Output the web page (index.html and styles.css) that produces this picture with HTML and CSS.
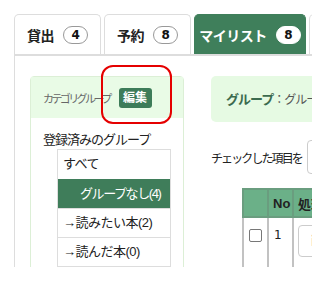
FILE: index.html
```html
<!DOCTYPE html>
<html lang="ja">

<head>
    <meta charset="UTF-8">
    <title>マイリスト</title>
    <link rel="stylesheet" href="styles.css">
</head>

<body>
    <div class="page">
        <ul class="tabs">
            <li class="tab"><span>貸出</span><b class="count">4</b></li>
            <li class="tab"><span>予約</span><b class="count">8</b></li>
            <li class="tab active"><span>マイリスト</span><b class="count">8</b></li>
            <li class="tab"></li>
        </ul>

        <div class="panel">
            <aside class="category">
                <div class="category-head">
                    <span class="category-title">カテゴリグループ</span>
                    <span class="edit">編集</span>
                </div>
                <div class="category-body">
                    <p class="label">登録済みのグループ</p>
                    <ul class="groups">
                        <li>すべて</li>
                        <li class="current">グループなし(4)</li>
                        <li>→読みたい本(2)</li>
                        <li>→読んだ本(0)</li>
                    </ul>
                </div>
            </aside>

            <section class="main">
                <div class="group-title"><b>グループ</b><span>：グループなし</span></div>
                <div class="bulk">
                    <span>チェックした項目を</span>
                    <div class="select"></div>
                </div>
                <table class="list">
                    <thead>
                        <tr>
                            <th class="c-check"></th>
                            <th class="c-no">No</th>
                            <th class="c-act">処理</th>
                        </tr>
                    </thead>
                    <tbody>
                        <tr>
                            <td class="c-check"><span class="checkbox"></span></td>
                            <td class="c-no">1</td>
                            <td class="c-act"><span class="btn">削除</span></td>
                        </tr>
                    </tbody>
                </table>
            </section>
        </div>

        <!-- 注目マーク -->
        <div class="marker"></div>
    </div>
</body>

</html>
```

FILE: styles.css
```css
* {
    margin: 0;
    padding: 0;
    box-sizing: border-box;
}

body {
    background: #fff;
    font-family: "Liberation Sans", "Noto Sans CJK JP", sans-serif;
    color: #222;
}

/* 画面の切り取り範囲 */
.page {
    position: relative;
    width: 312px;
    height: 267px;
    padding-left: 14px;
    overflow: hidden;
}

/* tabs */
.tabs {
    display: flex;
    gap: 3px;
    padding-top: 14px;
    list-style: none;
}

.tab {
    flex: none;
    width: 87px;
    height: 40px;
    display: flex;
    align-items: center;
    justify-content: center;
    gap: 9px;
    border: 1px solid #ddd;
    border-bottom: none;
    border-radius: 5px 5px 0 0;
    font-size: 14px;
    font-weight: bold;
    letter-spacing: -0.5px;
}

.tab.active {
    width: 112px;
    background: #3f7f5b;
    border-color: #3f7f5b;
    color: #fff;
}

.count {
    display: inline-block;
    width: 25px;
    height: 18px;
    line-height: 16px;
    border: 1px solid #999;
    border-radius: 9px;
    text-align: center;
    font-family: "DejaVu Sans", sans-serif;
    font-size: 12px;
    color: #111;
    background: #fff;
}

.active .count {
    border-color: #fff;
}

/* panel */
.panel {
    display: flex;
    gap: 27px;
    height: 300px;
    padding: 20px 0 0 15px;
    border-left: 1px solid #ddd;
    border-top: 2px solid #ddd;
}

.category {
    flex: none;
    width: 154px;
    border: 1px solid #dcefd6;
    border-radius: 4px 4px 0 0;
}

.category-head {
    display: flex;
    align-items: center;
    gap: 9px;
    height: 41px;
    padding-left: 12px;
    background: #e9fbe6;
}

.category-title {
    font-size: 11px;
    letter-spacing: -2.6px;
    color: #666;
}

.edit {
    width: 33px;
    height: 20px;
    line-height: 20px;
    text-align: center;
    background: #3d7c59;
    color: #fff;
    border-radius: 3px;
    font-size: 12px;
    font-weight: bold;
}

.category-body {
    padding: 13px 0 0 12px;
}

.label {
    font-size: 13px;
    line-height: 18px;
    letter-spacing: -1px;
}

.groups {
    list-style: none;
    width: 114px;
    margin-left: 14px;
    border: 1px solid #ddd;
}

.groups li {
    height: 29px;
    line-height: 28px;
    padding-left: 5px;
    border-top: 1px solid #ddd;
    font-size: 13px;
    letter-spacing: -0.5px;
    white-space: nowrap;
}

.groups li:first-child {
    border-top: none;
}

.groups li.current {
    padding-left: 22px;
    background: #3f7d5a;
    border-color: #3f7d5a;
    color: #fff;
    letter-spacing: -1.4px;
}

/* main */
.main {
    flex: 1;
    min-width: 0;
}

.group-title {
    height: 46px;
    line-height: 46px;
    padding-left: 15px;
    background: #e6fae3;
    border-radius: 5px 0 0 5px;
    white-space: nowrap;
    color: #3c6b4f;
}

.group-title b {
    font-size: 13px;
    letter-spacing: -1px;
}

.group-title span {
    font-size: 12px;
    color: #555;
    letter-spacing: -1px;
}

.bulk {
    display: flex;
    align-items: center;
    gap: 5px;
    margin-top: 18px;
    height: 34px;
    white-space: nowrap;
    font-size: 12px;
    letter-spacing: -1.9px;
}

.select {
    flex: none;
    width: 80px;
    height: 34px;
    border: 1px solid #ccc;
    border-radius: 4px;
}

.list {
    margin: 14px 0 0 31px;
    border-collapse: collapse;
    table-layout: fixed;
    width: 160px;
}

.list th,
.list td {
    border: 2px solid #c2c2c2;
    text-align: left;
    vertical-align: top;
    font-size: 13px;
}

.list th {
    height: 28px;
    vertical-align: middle;
    background: #6bb088;
    border-color: #6a9d7f;
    padding-left: 4px;
    font-weight: bold;
    white-space: nowrap;
}

.list td {
    height: 60px;
}

.c-check {
    width: 25px;
}

.c-no {
    width: 25px;
}

.list td.c-no {
    padding: 10px 0 0 5px;
    font-family: "DejaVu Sans", sans-serif;
    font-size: 12px;
}

.list td.c-check {
    padding: 11px 0 0 5px;
}

.list td.c-act {
    padding: 7px 0 0 4px;
}

.checkbox {
    display: block;
    width: 13px;
    height: 13px;
    border: 1px solid #777;
    border-radius: 2px;
}

.btn {
    display: block;
    width: 80px;
    height: 32px;
    line-height: 30px;
    padding-left: 12px;
    border: 1px solid #ccc;
    border-radius: 4px;
    font-size: 12px;
    color: #666;
}

.marker {
    position: absolute;
    left: 101px;
    top: 65px;
    width: 71px;
    height: 59px;
    border: 2px solid #e50000;
    border-radius: 12px;
}
```
